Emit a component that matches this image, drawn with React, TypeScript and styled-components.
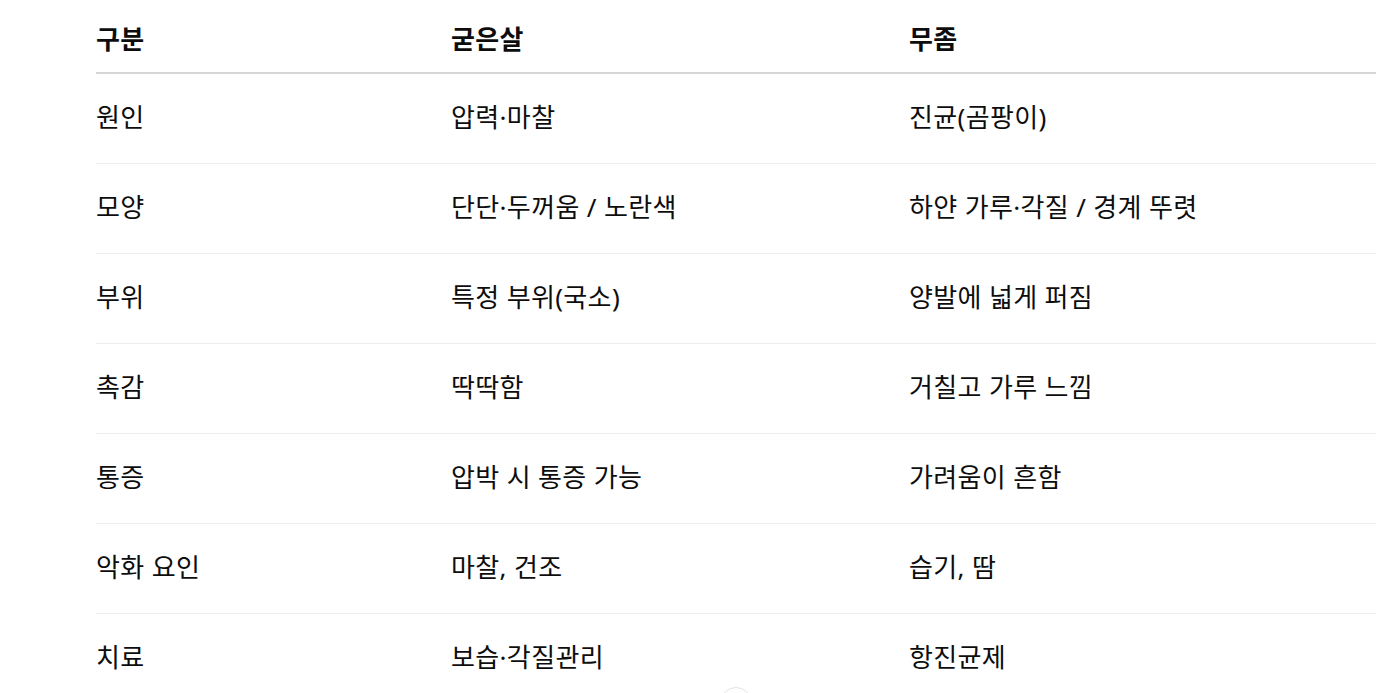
import React from "react";
import styled, { createGlobalStyle } from "styled-components";

const GlobalStyle = createGlobalStyle`
  html, body { margin: 0; padding: 0; background: #ffffff; }
  body {
    font-family: "Noto Sans", "Noto Sans CJK KR", sans-serif;
    color: #0d0d0d;
    overflow: hidden;
  }
`;

const Page = styled.div`
  position: relative;
  width: 1399px;
  height: 693px;
  padding: 8px 0 0 96px;
  box-sizing: border-box;
  overflow: hidden;
`;

const Table = styled.div`
  width: 1280px;
  display: grid;
  grid-template-columns: 355px 458px 1fr;
`;

const HeadCell = styled.div`
  height: 66px;
  padding-bottom: 3px;
  box-sizing: border-box;
  display: flex;
  align-items: center;
  font-size: 26px;
  line-height: 1;
  font-weight: 700;
  letter-spacing: 0.3px;
  border-bottom: 2px solid #d6d6d6;
`;

const Cell = styled.div`
  height: 90px;
  padding-bottom: 3px;
  box-sizing: border-box;
  display: flex;
  align-items: center;
  font-size: 26px;
  line-height: 1;
  font-weight: 400;
  letter-spacing: 0.35px;
  border-bottom: 1px solid #ececec;
`;

const ScrollButton = styled.div`
  position: absolute;
  left: 720px;
  top: 687px;
  width: 32px;
  height: 32px;
  border-radius: 50%;
  background: #ffffff;
  border: 1px solid #e3e3e3;
  box-sizing: border-box;
`;

const headers = ["구분", "굳은살", "무좀"];
const rows: string[][] = [
  ["원인", "압력·마찰", "진균(곰팡이)"],
  ["모양", "단단·두꺼움 / 노란색", "하얀 가루·각질 / 경계 뚜렷"],
  ["부위", "특정 부위(국소)", "양발에 넓게 퍼짐"],
  ["촉감", "딱딱함", "거칠고 가루 느낌"],
  ["통증", "압박 시 통증 가능", "가려움이 흔함"],
  ["악화 요인", "마찰, 건조", "습기, 땀"],
  ["치료", "보습·각질관리", "항진균제"],
];

export default function App() {
  return (
    <>
      <GlobalStyle />
      <Page>
        <Table>
          {headers.map((h) => (
            <HeadCell key={h}>{h}</HeadCell>
          ))}
          {rows.map((r) =>
            r.map((c, i) => <Cell key={r[0] + i}>{c}</Cell>)
          )}
        </Table>
        <ScrollButton />
      </Page>
    </>
  );
}
